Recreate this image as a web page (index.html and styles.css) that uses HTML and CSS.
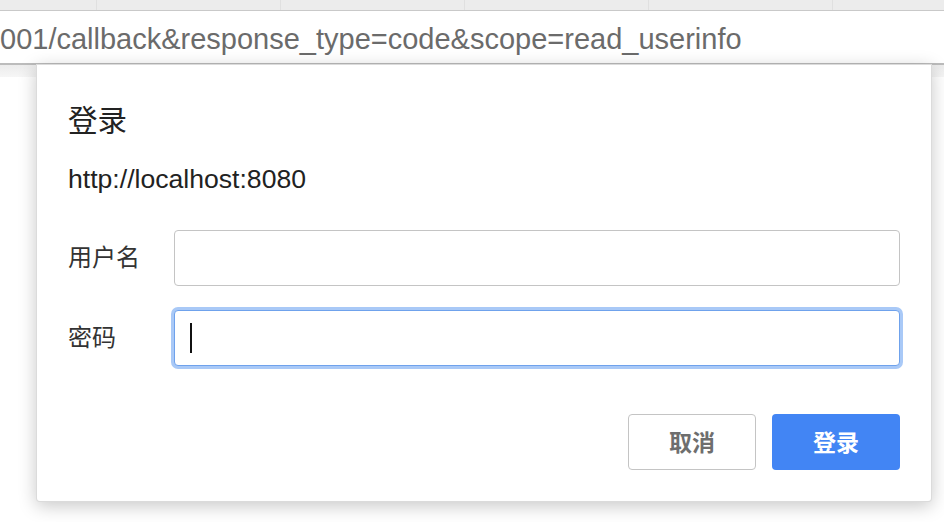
FILE: index.html
```html
<!DOCTYPE html>
<html lang="zh-CN">
<head>
<meta charset="utf-8">
<title>登录</title>
<link rel="stylesheet" href="styles.css">
</head>
<body>
<div class="browser">
  <div class="tabstrip">
    <span class="tabsep"></span><span class="tabsep"></span><span class="tabsep"></span><span class="tabsep"></span><span class="tabsep"></span>
  </div>
  <div class="urlbar"><span class="url">001/callback&amp;response_type=code&amp;scope=read_userinfo</span></div>
  <div class="bookmarks"></div>
  <div class="page"></div>
</div>
<div class="dialog">
  <div class="title">登录</div>
  <div class="origin">http://localhost:8080</div>
  <div class="form">
    <div class="row">
      <div class="label">用户名</div>
      <div class="field"></div>
    </div>
    <div class="row">
      <div class="label">密码</div>
      <div class="field focused"><span class="caret"></span></div>
    </div>
  </div>
  <div class="actions">
    <div class="btn cancel">取消</div>
    <div class="btn primary">登录</div>
  </div>
</div>
</body>
</html>
```
FILE: styles.css
```css
html, body {
  margin: 0;
  padding: 0;
  width: 944px;
  height: 522px;
  overflow: hidden;
  background: #ffffff;
  font-family: "Liberation Sans", "Noto Sans CJK SC", sans-serif;
}

.browser {
  display: flex;
  flex-direction: column;
  height: 522px;
}

.tabstrip {
  height: 10px;
  background: #ececec;
  border-bottom: 1px solid #c9c9c9;
  display: flex;
  padding-left: 96px;
  gap: 183px;
}

.tabsep {
  width: 1px;
  height: 10px;
  background: #e0e0e0;
}

.urlbar {
  height: 52px;
  background: #ffffff;
  display: flex;
  align-items: center;
  overflow: hidden;
  white-space: nowrap;
  border-bottom: 2px solid #bcbcbc;
}

.url {
  font-size: 29px;
  color: #6b6b6b;
  padding-top: 5px;
}

.bookmarks {
  height: 12px;
  background: linear-gradient(#ececec, #f6f6f6);
}

.page {
  flex: 1;
  background: #ffffff;
}

.dialog {
  position: absolute;
  left: 36px;
  top: 64px;
  width: 896px;
  height: 438px;
  box-sizing: border-box;
  background: #ffffff;
  border: 1px solid rgba(0, 0, 0, 0.14);
  border-radius: 0 0 4px 4px;
  box-shadow: 0 4px 18px rgba(0, 0, 0, 0.22);
  padding: 0 31px;
  display: flex;
  flex-direction: column;
  color: #222222;
}

.title {
  font-family: "Noto Sans CJK SC", sans-serif;
  font-size: 29.5px;
  line-height: 36px;
  margin-top: 35px;
  color: #222222;
}

.origin {
  font-size: 26.6px;
  line-height: 32px;
  margin-top: 27px;
  color: #222222;
}

.form {
  margin-top: 35px;
  display: flex;
  flex-direction: column;
  gap: 24px;
}

.row {
  display: flex;
  align-items: center;
}

.label {
  width: 106px;
  font-family: "Noto Sans CJK SC", sans-serif;
  font-size: 24px;
  color: #333333;
  padding-bottom: 5px;
}

.field {
  flex: 1;
  height: 56px;
  box-sizing: border-box;
  border: 1px solid #c4c4c4;
  border-radius: 4px;
  background: #ffffff;
  display: flex;
  align-items: center;
  padding-left: 15px;
}

.field.focused {
  border: 1px solid #6fa2ec;
  box-shadow: 0 0 0 3px #a9c9f7;
}

.caret {
  width: 2px;
  height: 30px;
  background: #111111;
}

.actions {
  margin-top: 48px;
  display: flex;
  justify-content: flex-end;
  gap: 16px;
}

.btn {
  width: 128px;
  height: 56px;
  box-sizing: border-box;
  border-radius: 4px;
  display: flex;
  align-items: center;
  justify-content: center;
  font-family: "Noto Sans CJK SC", sans-serif;
  font-weight: 700;
  font-size: 23px;
  padding-bottom: 3px;
}

.cancel {
  border: 1px solid #c4c4c4;
  background: #ffffff;
  color: #6e6e6e;
}

.primary {
  background: #4285f4;
  color: #ffffff;
}
```
